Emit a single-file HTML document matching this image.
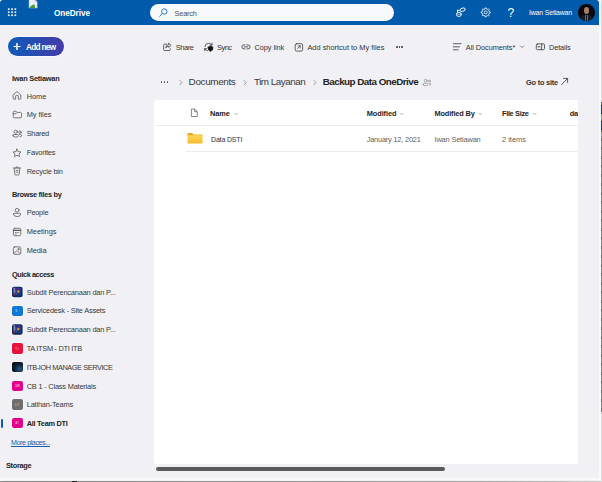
<!DOCTYPE html>
<html><head><meta charset="utf-8"><title>OneDrive</title>
<style>
html,body{margin:0;padding:0}
body{width:602px;height:482px;overflow:hidden;position:relative;background:#fff;font-family:"Liberation Sans",sans-serif}
.a,.t,.qi{position:absolute}
.t{white-space:nowrap;line-height:14px}
#win{position:absolute;left:0;top:0;width:600.7px;height:480.5px;background:#f0f0f5;border-radius:4px}
#hdr{position:absolute;left:0;top:0;width:599px;height:24.5px;background:#025aab;border-radius:3px 3px 0 0}
#search{position:absolute;left:150px;top:4.3px;width:244px;height:17px;border-radius:9px;background:#f7f9fc}
#avatar{position:absolute;left:578.2px;top:4.1px;width:16.6px;height:16.6px;border-radius:50%;background:#0a0a0c;overflow:hidden}
#avatar i{position:absolute;left:5.4px;top:2.8px;width:5.6px;height:6.8px;border-radius:45%;background:#a47c68;filter:blur(.5px)}
#avatar b{position:absolute;left:3px;top:10.5px;width:10.6px;height:8px;border-radius:3px 3px 0 0;background:#1b1d22}
#avatar u{position:absolute;left:6.6px;top:10.6px;width:3.4px;height:7px;background:linear-gradient(90deg,#3d6db5 0 30%,#14213a 30% 70%,#3d6db5 70%);filter:blur(.3px)}
#addnew{position:absolute;left:7.9px;top:37px;width:56.2px;height:19.3px;border-radius:10px;background:linear-gradient(90deg,#0f5cb8,#443aa8);box-shadow:0 0 0 .8px #f9f9fc}
.qi{left:12px;width:10.5px;height:10.5px;border-radius:2px}
#card{position:absolute;left:154.2px;top:100.4px;width:423.8px;height:364px;background:#fff;border-radius:3px 0 0 3px}
</style></head><body>
<div id="win"></div>
<div id="hdr"></div>
<svg class="a" style="left:0px;top:0px" width="31" height="26" viewBox="0 0 31 26"><g transform="translate(0.00 0.00)"><rect x="7.9" y="8.30" width="1.7" height="1.7" fill="#fff" opacity=".95"/><rect x="7.9" y="11.35" width="1.7" height="1.7" fill="#fff" opacity=".95"/><rect x="7.9" y="14.40" width="1.7" height="1.7" fill="#fff" opacity=".95"/><rect x="11.2" y="8.30" width="1.7" height="1.7" fill="#fff" opacity=".95"/><rect x="11.2" y="11.35" width="1.7" height="1.7" fill="#fff" opacity=".95"/><rect x="11.2" y="14.40" width="1.7" height="1.7" fill="#fff" opacity=".95"/><rect x="14.5" y="8.30" width="1.7" height="1.7" fill="#fff" opacity=".95"/><rect x="14.5" y="11.35" width="1.7" height="1.7" fill="#fff" opacity=".95"/><rect x="14.5" y="14.40" width="1.7" height="1.7" fill="#fff" opacity=".95"/></g></svg>
<svg class="a" style="left:28px;top:0px" width="12" height="10" viewBox="0 0 12 10"><g transform="translate(0.00 0.00)"><path d="M1 -1h5.4l2.8 2.8V8.1H1z" fill="#eef2fa" stroke="#9fb0cc" stroke-width="0.5"/><path d="M1.3 7.9c1-2.4 3.2-3.4 5.4-3.5L7.2 7.9z" fill="#4a9a3a"/><path d="M6.4 -1v2.8h2.8z" fill="#b8c4d8"/></g></svg>
<span class="t" style="left:54.00px;top:7px;font-size:8.2px;font-weight:700;color:#fff;letter-spacing:-0.057px;">OneDrive</span>
<div id="search"></div>
<svg class="a" style="left:158px;top:7px" width="11" height="11" viewBox="0 0 11 11" fill="none" stroke="#2b7cd3" stroke-width="1"><g transform="translate(0.50 0.50)"><circle cx="5.8" cy="4" r="2.7"/><path d="M3.8 6 L1.2 8.8" stroke-linecap="round"/></g></svg>
<span class="t" style="left:174.60px;top:7px;font-size:7.4px;font-weight:400;color:#505050;letter-spacing:-0.241px;">Search</span>
<svg class="a" style="left:455px;top:7px" width="13" height="12" viewBox="0 0 13 12" fill="none" stroke="#fff" stroke-width="0.9" stroke-linecap="round"><g transform="translate(0.00 0.00)"><rect x="5.2" y="1.2" width="5" height="3" rx="1.5" transform="rotate(-18 7.7 2.7)"/><path d="M2.6 3.2 V5.2"/><path d="M2.6 3.2 Q4.5 2.8 5.2 4"/><ellipse cx="3.9" cy="7.4" rx="2.5" ry="2.1"/><path d="M1.5 6.9 Q3.9 8.4 6.3 6.9" stroke-width="0.6"/></g></svg>
<svg class="a" style="left:480px;top:6px" width="12" height="12" viewBox="0 0 12 12" fill="none" stroke="#fff" stroke-width="0.8" stroke-linejoin="round"><g transform="translate(0.20 0.90)"><path d="M8.92 4.74 L9.96 4.94 L9.96 6.06 L8.92 6.26 L8.46 7.38 L9.06 8.26 L8.26 9.06 L7.38 8.46 L6.26 8.92 L6.06 9.96 L4.94 9.96 L4.74 8.92 L3.62 8.46 L2.74 9.06 L1.94 8.26 L2.54 7.38 L2.08 6.26 L1.04 6.06 L1.04 4.94 L2.08 4.74 L2.54 3.62 L1.94 2.74 L2.74 1.94 L3.62 2.54 L4.74 2.08 L4.94 1.04 L6.06 1.04 L6.26 2.08 L7.38 2.54 L8.26 1.94 L9.06 2.74 L8.46 3.62Z"/><circle cx="5.5" cy="5.5" r="1.5"/></g></svg>
<span class="t" style="left:507.40px;top:6px;font-size:12px;font-weight:400;color:#fff;letter-spacing:-0.674px;">?</span>
<span class="t" style="left:529.00px;top:6px;font-size:6.9px;font-weight:400;color:#fff;letter-spacing:-0.144px;">Iwan Setiawan</span>
<div id="avatar"><i></i><b></b><u></u></div>
<div id="addnew"></div>
<svg class="a" style="left:13px;top:42px" width="9" height="9" viewBox="0 0 9 9" stroke="#fff"><g transform="translate(0.00 0.50)"><path d="M4 0.5v7" stroke-width="1.5"/><path d="M0.5 4h7" stroke-width="1.1"/></g></svg>
<span class="t" style="left:26.00px;top:41px;font-size:8.2px;font-weight:700;color:#fff;letter-spacing:-0.667px;">Add new</span>
<span class="t" style="left:12.00px;top:72px;font-size:7.4px;font-weight:700;color:#242424;letter-spacing:-0.237px;">Iwan Setiawan</span>
<span class="t" style="left:26.70px;top:90px;font-size:7.4px;font-weight:400;color:#383838;letter-spacing:-0.035px;">Home</span>
<span class="t" style="left:26.70px;top:108px;font-size:7.4px;font-weight:400;color:#383838;letter-spacing:-0.035px;">My files</span>
<span class="t" style="left:26.70px;top:127px;font-size:7.4px;font-weight:400;color:#383838;letter-spacing:-0.261px;">Shared</span>
<span class="t" style="left:26.70px;top:146px;font-size:7.4px;font-weight:400;color:#383838;letter-spacing:-0.215px;">Favorites</span>
<span class="t" style="left:26.70px;top:165px;font-size:7.4px;font-weight:400;color:#383838;letter-spacing:-0.205px;">Recycle bin</span>
<span class="t" style="left:12.00px;top:188px;font-size:7.4px;font-weight:700;color:#242424;letter-spacing:-0.319px;">Browse files by</span>
<span class="t" style="left:26.70px;top:206px;font-size:7.4px;font-weight:400;color:#383838;letter-spacing:-0.240px;">People</span>
<span class="t" style="left:26.70px;top:225px;font-size:7.4px;font-weight:400;color:#383838;letter-spacing:-0.028px;">Meetings</span>
<span class="t" style="left:26.70px;top:244px;font-size:7.4px;font-weight:400;color:#383838;letter-spacing:-0.071px;">Media</span>
<span class="t" style="left:12.00px;top:268px;font-size:7.4px;font-weight:700;color:#242424;letter-spacing:-0.443px;">Quick access</span>
<svg class="a" style="left:11px;top:285px" width="14" height="14" viewBox="0 0 14 14"><g transform="translate(0.00 0.70)"><rect x="0.3" y="0.3" width="12.1" height="12.1" rx="2.6" fill="#f8f8fb"/><rect x="1" y="1" width="10.6" height="10.5" rx="2" fill="#0c2a63"/><rect x="2.6" y="2.2" width="7.6" height="3.6" fill="#3a3288"/><rect x="2.6" y="5.6" width="7.6" height="4.2" fill="#133c7c"/><rect x="2.7" y="2" width="0.9" height="5.5" fill="#b8bfd8"/><circle cx="7.3" cy="5.9" r="1.3" fill="#d98a2b"/><circle cx="3.1" cy="8.7" r="0.9" fill="#c0283c"/><path d="M4 3.5 L5.5 9 " stroke="#6a5cc0" stroke-width="0.7"/></g></svg>
<span class="t" style="left:26.70px;top:286px;font-size:7.4px;font-weight:400;color:#383838;letter-spacing:-0.173px;">Subdit Perencanaan dan P...</span>
<div class="qi" style="top:305.50px;background:#0f78d4;box-shadow:0 0 0 .8px #f8f8fb"></div>
<span class="t" style="left:15.20px;top:304px;font-size:3px;font-weight:400;color:rgba(255,255,255,.8);letter-spacing:2.399px;">S</span>
<span class="t" style="left:26.70px;top:304px;font-size:7.4px;font-weight:400;color:#383838;letter-spacing:-0.196px;">Servicedesk - Site Assets</span>
<svg class="a" style="left:11px;top:323px" width="14" height="14" viewBox="0 0 14 14"><g transform="translate(0.00 0.20)"><rect x="0.3" y="0.3" width="12.1" height="12.1" rx="2.6" fill="#f8f8fb"/><rect x="1" y="1" width="10.6" height="10.5" rx="2" fill="#0c2a63"/><rect x="2.6" y="2.2" width="7.6" height="3.6" fill="#3a3288"/><rect x="2.6" y="5.6" width="7.6" height="4.2" fill="#133c7c"/><rect x="2.7" y="2" width="0.9" height="5.5" fill="#b8bfd8"/><circle cx="7.3" cy="5.9" r="1.3" fill="#d98a2b"/><circle cx="3.1" cy="8.7" r="0.9" fill="#c0283c"/><path d="M4 3.5 L5.5 9 " stroke="#6a5cc0" stroke-width="0.7"/></g></svg>
<span class="t" style="left:26.70px;top:323px;font-size:7.4px;font-weight:400;color:#383838;letter-spacing:-0.173px;">Subdit Perencanaan dan P...</span>
<div class="qi" style="top:343.00px;background:#e8123f;box-shadow:0 0 0 .8px #f8f8fb"></div>
<span class="t" style="left:15.20px;top:342px;font-size:3px;font-weight:400;color:rgba(255,255,255,.8);letter-spacing:1.006px;">Ti</span>
<span class="t" style="left:26.70px;top:342px;font-size:7.4px;font-weight:400;color:#383838;letter-spacing:-0.294px;">TA ITSM - DTI ITB</span>
<div class="qi" style="top:361.70px;background:radial-gradient(circle at 70% 70%,#2a5a84 0,#0e2438 45%,#05070a 85%);box-shadow:0 0 0 .8px #f8f8fb"></div>
<span class="t" style="left:26.70px;top:361px;font-size:7.4px;font-weight:400;color:#383838;letter-spacing:-0.449px;">ITB-IOH MANAGE SERVICE</span>
<div class="qi" style="top:380.70px;background:#e3008c;box-shadow:0 0 0 .8px #f8f8fb"></div>
<span class="t" style="left:15.20px;top:379px;font-size:3px;font-weight:400;color:rgba(255,255,255,.8);letter-spacing:-0.050px;">MB</span>
<span class="t" style="left:26.70px;top:380px;font-size:7.4px;font-weight:400;color:#383838;letter-spacing:-0.196px;">CB 1 - Class Materials</span>
<div class="qi" style="top:399.20px;background:#6e6e6e;box-shadow:0 0 0 .8px #f8f8fb"></div>
<span class="t" style="left:15.20px;top:398px;font-size:3px;font-weight:400;color:rgba(255,255,255,.8);letter-spacing:0.561px;">LT</span>
<span class="t" style="left:26.70px;top:398px;font-size:7.4px;font-weight:400;color:#383838;letter-spacing:-0.172px;">Latihan-Teams</span>
<div class="qi" style="top:417.90px;background:#e3008c;box-shadow:0 0 0 .8px #f8f8fb"></div>
<span class="t" style="left:15.20px;top:416px;font-size:3px;font-weight:400;color:rgba(255,255,255,.8);letter-spacing:0.394px;">AT</span>
<span class="t" style="left:26.70px;top:417px;font-size:7.4px;font-weight:700;color:#242424;letter-spacing:-0.272px;">All Team DTI</span>
<div class="a" style="left:1.4px;top:418.6px;width:1.8px;height:9px;background:#0f5bb5;border-radius:1px"></div>
<span class="t" style="left:11.00px;top:436px;font-size:7.1px;font-weight:400;color:#1a5aa8;letter-spacing:-0.399px;text-decoration:underline;text-decoration-thickness:0.6px;text-underline-offset:0.8px;">More places...</span>
<span class="t" style="left:6.00px;top:459px;font-size:7.4px;font-weight:700;color:#242424;letter-spacing:-0.322px;">Storage</span>
<svg class="a" style="left:12px;top:90px" width="11" height="11" viewBox="0 0 11 11" fill="none" stroke="#5c5c5c" stroke-width="0.8" stroke-linecap="round" stroke-linejoin="round" ><g transform="translate(0.00 0.60)"><path d="M1.2 4.3 L5 0.9 L8.8 4.3 V8 Q8.8 8.6 8.2 8.6 H6.4 V5.6 Q6.4 5 5.8 5 H4.2 Q3.6 5 3.6 5.6 V8.6 H1.8 Q1.2 8.6 1.2 8 Z"/></g></svg>
<svg class="a" style="left:12px;top:110px" width="12" height="10" viewBox="0 0 12 10" fill="none" stroke="#5c5c5c" stroke-width="0.8" stroke-linecap="round" stroke-linejoin="round" ><g transform="translate(0.00 0.10)"><path d="M1.2 2 Q1.2 1.1 2.1 1.1 H4 L5.2 2.3 H8.6 Q9.5 2.3 9.5 3.2 V6.8 Q9.5 7.7 8.6 7.7 H2.1 Q1.2 7.7 1.2 6.8 Z M1.2 3.6 H4.1 L5.2 2.4"/></g></svg>
<svg class="a" style="left:12px;top:129px" width="12" height="9" viewBox="0 0 12 9" fill="none" stroke="#5c5c5c" stroke-width="0.8" stroke-linecap="round" stroke-linejoin="round" ><g transform="translate(0.00 0.50)"><circle cx="3.7" cy="2.3" r="1.6"/><path d="M0.9 6.2 Q0.9 5 2 5 H5.4 Q6.5 5 6.5 6.2 Q6.5 7.6 3.7 7.6 Q0.9 7.6 0.9 6.2 Z"/><circle cx="8" cy="2.7" r="1.2"/><path d="M7.6 5 H8.7 Q9.7 5 9.7 6 Q9.7 7.4 8 7.3"/></g></svg>
<svg class="a" style="left:12px;top:148px" width="11" height="10" viewBox="0 0 11 10" fill="none" stroke="#5c5c5c" stroke-width="0.8" stroke-linecap="round" stroke-linejoin="round" ><g transform="translate(0.00 0.30)"><path d="M5 0.8 L6.2 3.3 L9 3.7 L7 5.6 L7.5 8.3 L5 7 L2.5 8.3 L3 5.6 L1 3.7 L3.8 3.3 Z"/></g></svg>
<svg class="a" style="left:12px;top:166px" width="10" height="11" viewBox="0 0 10 11" fill="none" stroke="#5c5c5c" stroke-width="0.8" stroke-linecap="round" stroke-linejoin="round" ><g transform="translate(0.50 0.00)"><path d="M0.9 2 H8.1 M3.3 1.9 Q3.3 0.8 4.5 0.8 Q5.7 0.8 5.7 1.9 M1.7 2.2 L2.3 8.2 Q2.4 9 3.2 9 H5.8 Q6.6 9 6.7 8.2 L7.3 2.2 M3.6 4.4 H5.4 M3.6 6.2 H5.4" /></g></svg>
<svg class="a" style="left:12px;top:207px" width="10" height="11" viewBox="0 0 10 11" fill="none" stroke="#5c5c5c" stroke-width="0.8" stroke-linecap="round" stroke-linejoin="round" ><g transform="translate(0.50 0.70)"><circle cx="4.6" cy="2.5" r="1.9"/><path d="M1 6.4 Q1 5.6 1.8 5.6 H7.4 Q8.2 5.6 8.2 6.4 Q8.2 8.9 4.6 8.9 Q1 8.9 1 6.4 Z"/></g></svg>
<svg class="a" style="left:12px;top:227px" width="10" height="10" viewBox="0 0 10 10" fill="none" stroke="#5c5c5c" stroke-width="0.8" stroke-linecap="round" stroke-linejoin="round" ><g transform="translate(0.50 0.40)"><rect x="0.9" y="0.9" width="7.4" height="7.4" rx="1.3"/><path d="M0.9 3 H8.1" stroke-width="1.1"/><path d="M2.7 5.2 H3.9 M5.1 5.2 H6.3 M2.7 6.6 H3.9" stroke-width="0.7"/></g></svg>
<svg class="a" style="left:12px;top:246px" width="10" height="10" viewBox="0 0 10 10" fill="none" stroke="#5c5c5c" stroke-width="0.8" stroke-linecap="round" stroke-linejoin="round" ><g transform="translate(0.50 0.00)"><rect x="0.9" y="0.9" width="7.4" height="7.4" rx="1.3"/><circle cx="5.9" cy="3.2" r="0.7"/><path d="M1.6 7.4 L4 5 Q4.5 4.6 5 5 L7.4 7.4"/></g></svg>
<span class="t" style="left:175.80px;top:41px;font-size:7.4px;font-weight:400;color:#333;letter-spacing:-0.390px;">Share</span>
<span class="t" style="left:217.00px;top:41px;font-size:7.4px;font-weight:400;color:#333;letter-spacing:-0.488px;">Sync</span>
<span class="t" style="left:254.60px;top:41px;font-size:7.4px;font-weight:400;color:#333;letter-spacing:-0.093px;">Copy link</span>
<span class="t" style="left:307.40px;top:41px;font-size:7.4px;font-weight:400;color:#333;letter-spacing:0.008px;">Add shortcut to My files</span>
<span class="t" style="left:465.80px;top:41px;font-size:7.4px;font-weight:400;color:#333;letter-spacing:-0.078px;">All Documents*</span>
<span class="t" style="left:549.00px;top:41px;font-size:7.4px;font-weight:400;color:#333;letter-spacing:-0.160px;">Details</span>
<div class="a" style="left:396.1px;top:46px;width:1.5px;height:1.5px;border-radius:1px;background:#333"></div>
<div class="a" style="left:398.7px;top:46px;width:1.5px;height:1.5px;border-radius:1px;background:#333"></div>
<div class="a" style="left:401.3px;top:46px;width:1.5px;height:1.5px;border-radius:1px;background:#333"></div>
<svg class="a" style="left:162px;top:42px" width="11" height="10" viewBox="0 0 11 10" fill="none" stroke="#3a3a3a" stroke-width="0.75" stroke-linecap="round" stroke-linejoin="round" ><g transform="translate(0.50 0.50)"><path d="M4.2 1.6 H2.3 Q1.1 1.6 1.1 2.8 V6.8 Q1.1 8 2.3 8 H6.6 Q7.8 8 7.8 6.8 V6.2"/><path d="M6.2 0.9 L8.6 2.9 L6.2 4.9 V3.8 Q4 3.7 3.2 5.6 Q3.2 2.2 6.2 2 Z"/></g></svg>
<svg class="a" style="left:203px;top:42px" width="11" height="11" viewBox="0 0 11 11" fill="none" stroke="#3a3a3a" stroke-width="0.8" stroke-linecap="round" stroke-linejoin="round" ><g transform="translate(0.50 0.00)"><path d="M1.4 4.6 Q1.6 1.4 5 1.3 Q7.4 1.3 8.3 3 M8.5 1 V3.1 H6.4"/><path d="M1.2 6.6 V8.7 M1.2 6.8 H3.2"/><path d="M1.5 7 Q2.3 8.5 4 8.8"/><path d="M4.6 4.9 L7 4.1 L9.4 4.9 V6.8 Q9.4 8.4 7 9.4 Q4.6 8.4 4.6 6.8 Z" fill="#111" stroke="#111" stroke-width="0.5"/></g></svg>
<svg class="a" style="left:241px;top:44px" width="11" height="7" viewBox="0 0 11 7" fill="none" stroke="#3a3a3a" stroke-width="0.8" stroke-linecap="round" stroke-linejoin="round" ><g transform="translate(0.00 0.00)"><path d="M4 0.9 H3 Q0.9 0.9 0.9 2.9 Q0.9 4.9 3 4.9 H4 M6 0.9 H7 Q9.1 0.9 9.1 2.9 Q9.1 4.9 7 4.9 H6 M3.3 2.9 H6.7"/></g></svg>
<svg class="a" style="left:294px;top:42px" width="10" height="10" viewBox="0 0 10 10" fill="none" stroke="#3a3a3a" stroke-width="0.8" stroke-linecap="round" stroke-linejoin="round" ><g transform="translate(0.30 0.80)"><rect x="0.9" y="0.9" width="7.4" height="7.4" rx="1.5"/><path d="M3.3 5.7 L5.8 3.2 M3.8 3.1 H5.9 V5.2" stroke-width="0.7"/></g></svg>
<svg class="a" style="left:452px;top:42px" width="11" height="10" viewBox="0 0 11 10" fill="none" stroke="#3a3a3a" stroke-width="0.8" stroke-linecap="round" stroke-linejoin="round" ><g transform="translate(0.50 0.50)"><path d="M0.8 1.2 H8.6 M0.8 4.3 H7 M0.8 7.3 H5.6"/></g></svg>
<svg class="a" style="left:535px;top:43px" width="11" height="9" viewBox="0 0 11 9" fill="none" stroke="#3a3a3a" stroke-width="0.8" stroke-linecap="round" stroke-linejoin="round" ><g transform="translate(0.50 0.00)"><rect x="0.8" y="0.9" width="8.2" height="5.8" rx="1.2"/><path d="M6.2 0.9 V6.7 M2.4 3.8 H4.6" /></g></svg>
<svg class="a" style="left:519px;top:45px" width="6" height="5" viewBox="0 0 6 5" fill="none" stroke="#555" stroke-width="0.7" stroke-linecap="round" stroke-linejoin="round" ><g transform="translate(0.80 0.20)"><path d="M0.7 0.8 L2.3 2.4 L3.9 0.8"/></g></svg>
<div class="a" style="left:160.8px;top:81.3px;width:1.6px;height:1.6px;border-radius:1px;background:#444"></div>
<div class="a" style="left:163.7px;top:81.3px;width:1.6px;height:1.6px;border-radius:1px;background:#444"></div>
<div class="a" style="left:166.6px;top:81.3px;width:1.6px;height:1.6px;border-radius:1px;background:#444"></div>
<span class="t" style="left:188.60px;top:75px;font-size:9.9px;font-weight:400;color:#383838;letter-spacing:-0.341px;">Documents</span>
<span class="t" style="left:254.00px;top:75px;font-size:9.9px;font-weight:400;color:#383838;letter-spacing:-0.506px;">Tim Layanan</span>
<span class="t" style="left:322.70px;top:75px;font-size:9.8px;font-weight:700;color:#242424;letter-spacing:-0.508px;">Backup Data OneDrive</span>
<svg class="a" style="left:179px;top:79px" width="5" height="8" viewBox="0 0 5 8" fill="none" stroke="#888" stroke-width="0.8"><g transform="translate(0.00 0.20)"><path d="M0.6 1 L3 3.5 L0.6 6"/></g></svg>
<svg class="a" style="left:243px;top:79px" width="5" height="8" viewBox="0 0 5 8" fill="none" stroke="#888" stroke-width="0.8"><g transform="translate(0.20 0.20)"><path d="M0.6 1 L3 3.5 L0.6 6"/></g></svg>
<svg class="a" style="left:313px;top:79px" width="5" height="8" viewBox="0 0 5 8" fill="none" stroke="#888" stroke-width="0.8"><g transform="translate(0.00 0.20)"><path d="M0.6 1 L3 3.5 L0.6 6"/></g></svg>
<svg class="a" style="left:422px;top:78px" width="11" height="10" viewBox="0 0 11 10" fill="none" stroke="#8e8e8e" stroke-width="0.7" stroke-linecap="round" stroke-linejoin="round" ><g transform="translate(0.30 0.50)"><circle cx="3.3" cy="2.2" r="1.4"/><path d="M0.9 5.9 Q0.9 4.8 1.9 4.8 H4.7 Q5.7 4.8 5.7 5.9 Q5.7 7.4 3.3 7.4 Q0.9 7.4 0.9 5.9 Z"/><circle cx="7" cy="2.6" r="1"/><path d="M6.9 4.8 H7.6 Q8.5 4.8 8.5 5.7 Q8.5 6.8 7 6.9"/></g></svg>
<span class="t" style="left:526.00px;top:76px;font-size:7.4px;font-weight:700;color:#333;letter-spacing:-0.212px;">Go to site</span>
<svg class="a" style="left:560px;top:77px" width="9" height="9" viewBox="0 0 9 9" fill="none" stroke="#333" stroke-width="0.8"><g transform="translate(0.50 0.50)"><path d="M0.8 7.4 L7 1 M2.6 0.9 H7.1 V5.4"/></g></svg>
<div id="card"></div>
<div class="a" style="left:154.5px;top:125.2px;width:423.5px;height:0.8px;background:#ececf0"></div>
<div class="a" style="left:185.5px;top:151.4px;width:392.5px;height:0.8px;background:#ececf0"></div>
<span class="t" style="left:210.00px;top:107px;font-size:7.4px;font-weight:700;color:#242424;letter-spacing:-0.114px;">Name</span>
<span class="t" style="left:366.70px;top:107px;font-size:7.4px;font-weight:700;color:#242424;letter-spacing:-0.077px;">Modified</span>
<span class="t" style="left:434.50px;top:107px;font-size:7.4px;font-weight:700;color:#242424;letter-spacing:-0.158px;">Modified By</span>
<span class="t" style="left:502.00px;top:107px;font-size:7.4px;font-weight:700;color:#242424;letter-spacing:-0.335px;">File Size</span>
<div class="a" style="left:569.8px;top:105px;width:8.2px;height:18px;overflow:hidden"><span class="t" style="left:0.00px;top:2px;font-size:7.4px;font-weight:700;color:#242424;letter-spacing:-0.304px;">date</span></div>
<svg class="a" style="left:234px;top:112px" width="5" height="4" viewBox="0 0 5 4" fill="none" stroke="#777" stroke-width="0.6"><g transform="translate(0.20 0.60)"><path d="M0.5 0.5 L2 2 L3.5 0.5"/></g></svg>
<svg class="a" style="left:399px;top:112px" width="5" height="4" viewBox="0 0 5 4" fill="none" stroke="#777" stroke-width="0.6"><g transform="translate(0.80 0.60)"><path d="M0.5 0.5 L2 2 L3.5 0.5"/></g></svg>
<svg class="a" style="left:478px;top:112px" width="5" height="4" viewBox="0 0 5 4" fill="none" stroke="#777" stroke-width="0.6"><g transform="translate(0.30 0.60)"><path d="M0.5 0.5 L2 2 L3.5 0.5"/></g></svg>
<svg class="a" style="left:532px;top:112px" width="5" height="4" viewBox="0 0 5 4" fill="none" stroke="#777" stroke-width="0.6"><g transform="translate(0.80 0.60)"><path d="M0.5 0.5 L2 2 L3.5 0.5"/></g></svg>
<span class="t" style="left:211.00px;top:133px;font-size:7.0px;font-weight:400;color:#333;letter-spacing:-0.164px;">Data DSTI</span>
<span class="t" style="left:366.70px;top:133px;font-size:7.4px;font-weight:400;color:#616161;letter-spacing:-0.199px;">January 12, 2021</span>
<span class="t" style="left:434.50px;top:133px;font-size:7.4px;font-weight:400;color:#616161;letter-spacing:-0.156px;">Iwan Setiawan</span>
<span class="t" style="left:502.00px;top:133px;font-size:7.4px;font-weight:400;color:#616161;letter-spacing:0.021px;">2 items</span>
<svg class="a" style="left:190px;top:108px" width="9" height="10" viewBox="0 0 9 10" fill="none" stroke="#555" stroke-width="0.7"><g transform="translate(0.40 0.30)"><path d="M1 0.8h3.3l2.6 2.6v4.8H1z M4.3 0.8v2.6h2.6"/></g></svg>
<svg class="a" style="left:187px;top:132px" width="17" height="13" viewBox="0 0 17 13"><g transform="translate(0.00 0.50)"><path d="M0.5 1.6c0-.6.4-1 1-1h3.6l1.5 1.5h7.9c.6 0 1 .4 1 1v1H0.5z" fill="#e9a920"/><defs><linearGradient id="fg" x1="0" y1="0" x2="0" y2="1"><stop offset="0" stop-color="#ffd65c"/><stop offset="1" stop-color="#f8ba28"/></linearGradient></defs><rect x="0.5" y="2.7" width="15" height="8.4" rx="0.9" fill="url(#fg)"/></g></svg>
<div class="a" style="left:156px;top:467.4px;width:288.5px;height:3.2px;border-radius:2px;background:#5a5a5a"></div>
<div class="a" style="left:598.7px;top:24.5px;width:2px;height:456px;background:#fafafc"></div>
<div class="a" style="left:0;top:478.2px;width:600.6px;height:2.3px;background:#f9f9fb;border-radius:0 0 4px 4px"></div>
<div class="a" style="left:601px;top:0;width:1px;height:482px;background:#dcdcde"></div>
<div class="a" style="left:601px;top:102px;width:1px;height:310px;background:repeating-linear-gradient(#6a6a6a 0 3px,#8e8e8e 3px 9px)"></div>
<div class="a" style="left:601px;top:105px;width:1px;height:9px;background:#12306a"></div>
<div class="a" style="left:601px;top:121px;width:1px;height:9px;background:#12306a"></div>
<div class="a" style="left:0;top:480.5px;width:602px;height:1.5px;background:linear-gradient(90deg,#8a8a8a,#a8a8a8 80%,#d0d0d0)"></div>
<div class="a" style="left:72px;top:480.6px;width:5px;height:1.4px;background:#222"></div>
</body></html>
